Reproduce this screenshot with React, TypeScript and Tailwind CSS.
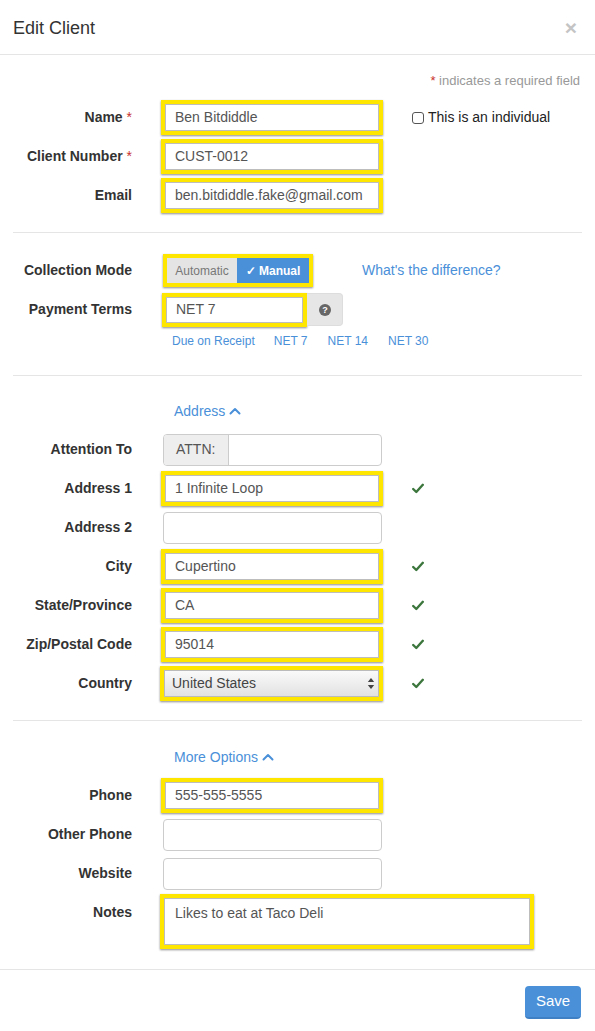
import React from "react";

const Y = "border-[4px] border-[#ffe600] shadow-[0_1px_2px_rgba(0,0,0,0.45)]";

function Label({ text, req }: { text: string; req?: boolean }) {
  return (
    <div className="w-[132px] shrink-0 text-right text-[14px] font-bold text-[#333]">
      {text}
      {req && <span className="font-normal text-[#c9302c]"> *</span>}
    </div>
  );
}

function Check() {
  return (
    <svg width="12" height="11" viewBox="0 0 12 11" className="ml-[30px]">
      <path d="M1.2 6 L4.3 9 L10.8 1.8" fill="none" stroke="#3c763d" strokeWidth="2.4" strokeLinecap="round" strokeLinejoin="round" />
    </svg>
  );
}

function YInput({ value, check }: { value: string; check?: boolean }) {
  return (
    <div className="flex items-center">
      <div className="w-[219px]">
        <div className={`-ml-[2px] w-[222px] h-[35px] ${Y} bg-white`}>
          <div className="h-full border border-[#bdbdbd] bg-white flex items-center pl-[9px] text-[14px] text-[#555]">{value}</div>
        </div>
      </div>
      {check && <Check />}
    </div>
  );
}

function PInput({ children }: { children?: React.ReactNode }) {
  return (
    <div className="w-[219px] h-[32px] border border-[#ccc] rounded-[4px] bg-white flex overflow-hidden">{children}</div>
  );
}

function Row({ label, req, children }: { label: string; req?: boolean; children?: React.ReactNode }) {
  return (
    <div className="h-[39px] flex items-center">
      <Label text={label} req={req} />
      <div className="ml-[31px] flex items-center">{children}</div>
    </div>
  );
}

function ChevUp() {
  return (
    <svg width="12" height="8" viewBox="0 0 12 8" className="ml-[4px]">
      <path d="M1.5 6.5 L6 2 L10.5 6.5" fill="none" stroke="#4a90d9" strokeWidth="2" strokeLinecap="round" strokeLinejoin="round" />
    </svg>
  );
}

export default function App() {
  return (
    <div className="w-[595px] h-[1031px] bg-white font-['Liberation_Sans',Arial,sans-serif] text-[#333] overflow-hidden">
      {/* header */}
      <div className="h-[55px] border-b border-[#e5e5e5] flex items-center justify-between pl-[13px] pr-[18px]">
        <div className="text-[18px] text-[#333] pt-[2px]">Edit Client</div>
        <div className="text-[21px] font-bold text-[#c4c4c4] leading-none">×</div>
      </div>

      {/* section 1 */}
      <div className="pt-[16px] h-[36px] text-right pr-[15px] text-[13px] leading-[20px] text-[#999]">
        <span className="text-[#c9302c]">*</span> indicates a required field
      </div>
      <div className="mt-[7px]">
        <div className="h-[39px] flex items-center">
          <Label text="Name" req />
          <div className="ml-[31px]">
            <YInput value="Ben Bitdiddle" />
          </div>
          <div className="ml-[30px] flex items-center text-[14px] text-[#222]">
            <span className="w-[12px] h-[12px] border border-[#555] rounded-[3px] mr-[4px] bg-white" />
            This is an individual
          </div>
        </div>
        <Row label="Client Number" req>
          <YInput value="CUST-0012" />
        </Row>
        <Row label="Email">
          <YInput value="ben.bitdiddle.fake@gmail.com" />
        </Row>
      </div>
      <div className="mt-[17px] mx-[13px] h-px bg-[#e5e5e5]" />

      {/* section 2 */}
      <div className="mt-[18px]">
        <div className="h-[39px] flex items-center">
          <Label text="Collection Mode" />
          <div className="ml-[31px] flex items-center">
            <div className={`w-[150px] h-[33px] ${Y} flex`}>
              <div className="w-[70px] h-full bg-[#e4e4e4] text-[#777] text-[12px] flex items-center justify-center">Automatic</div>
              <div className="flex-1 h-full bg-[#4a90d9] text-white text-[12px] font-bold flex items-center justify-center">✓ Manual</div>
            </div>
            <div className="ml-[49px] text-[14px] text-[#4a90d9]">What's the difference?</div>
          </div>
        </div>
        <div className="h-[39px] flex items-center">
          <Label text="Payment Terms" />
          <div className="ml-[30px] flex items-center">
            <div className={`w-[145px] h-[34px] ${Y} bg-white`}>
              <div className="h-full border border-[#bdbdbd] flex items-center pl-[9px] text-[14px] text-[#555]">NET 7</div>
            </div>
            <div className="w-[36px] h-[33px] bg-[#e6e6e6] rounded-r-[4px] border border-l-0 border-[#ddd] flex items-center justify-center">
              <svg width="12" height="12" viewBox="0 0 12 12">
                <circle cx="6" cy="6" r="6" fill="#666" />
                <text x="6" y="9.2" textAnchor="middle" fontSize="9" fontWeight="bold" fill="#fff" fontFamily="Liberation Sans, Arial, sans-serif">?</text>
              </svg>
            </div>
          </div>
        </div>
        <div className="mt-[1px] h-[22px] flex items-center pl-[172px] text-[12px] text-[#4a90d9]">
          <span>Due on Receipt</span>
          <span className="ml-[19px]">NET 7</span>
          <span className="ml-[20px]">NET 14</span>
          <span className="ml-[20px]">NET 30</span>
        </div>
      </div>
      <div className="mt-[23px] mx-[13px] h-px bg-[#e5e5e5]" />

      {/* section 3 */}
      <div className="mt-[25px] h-[20px] flex items-center pl-[174px] text-[14px] text-[#4a90d9]">
        Address <ChevUp />
      </div>
      <div className="mt-[9px]">
        <Row label="Attention To">
          <PInput>
            <div className="w-[65px] h-full bg-[#eee] border-r border-[#ccc] flex items-center pl-[12px] text-[14px] text-[#555]">ATTN:</div>
            <div className="flex-1" />
          </PInput>
        </Row>
        <Row label="Address 1">
          <YInput value="1 Infinite Loop" check />
        </Row>
        <Row label="Address 2">
          <PInput />
        </Row>
        <Row label="City">
          <YInput value="Cupertino" check />
        </Row>
        <Row label="State/Province">
          <YInput value="CA" check />
        </Row>
        <Row label="Zip/Postal Code">
          <YInput value="95014" check />
        </Row>
        <Row label="Country">
          <div className="flex items-center">
            <div className="w-[219px]">
              <div className={`-ml-[3px] w-[223px] h-[35px] ${Y}`}>
                <div className="h-full border border-[#bbb] bg-gradient-to-b from-[#fafafa] to-[#e2e2e2] flex items-center justify-between pl-[7px] pr-[3px] text-[14px] text-[#444]">
                  <span>United States</span>
                  <svg width="8" height="13" viewBox="0 0 8 13">
                    <path d="M4 1 L7.2 5 L0.8 5 Z" fill="#444" />
                    <path d="M4 12 L7.2 8 L0.8 8 Z" fill="#444" />
                  </svg>
                </div>
              </div>
            </div>
            <Check />
          </div>
        </Row>
      </div>
      <div className="mt-[17px] mx-[13px] h-px bg-[#e5e5e5]" />

      {/* section 4 */}
      <div className="mt-[26px] h-[20px] flex items-center pl-[174px] text-[14px] text-[#4a90d9]">
        More Options <ChevUp />
      </div>
      <div className="mt-[9px]">
        <Row label="Phone">
          <YInput value="555-555-5555" />
        </Row>
        <Row label="Other Phone">
          <PInput />
        </Row>
        <Row label="Website">
          <PInput />
        </Row>
        <div className="mt-[1px] flex items-start">
          <div className="pt-[8px]">
            <Label text="Notes" />
          </div>
          <div className={`ml-[28px] w-[374px] h-[55px] ${Y} bg-white`}>
            <div className="h-full border border-[#bdbdbd] pl-[10px] pt-[4px] text-[14px] text-[#555]">Likes to eat at Taco Deli</div>
          </div>
        </div>
      </div>

      {/* footer */}
      <div className="mt-[20px] h-px bg-[#e5e5e5]" />
      <div className="pt-[16px] flex justify-end pr-[14px]">
        <div className="w-[56px] h-[33px] rounded-[4px] bg-[#4a90d9] border-b-[2px] border-[#3f7fc4] text-white text-[15px] flex items-center justify-center">Save</div>
      </div>
    </div>
  );
}
